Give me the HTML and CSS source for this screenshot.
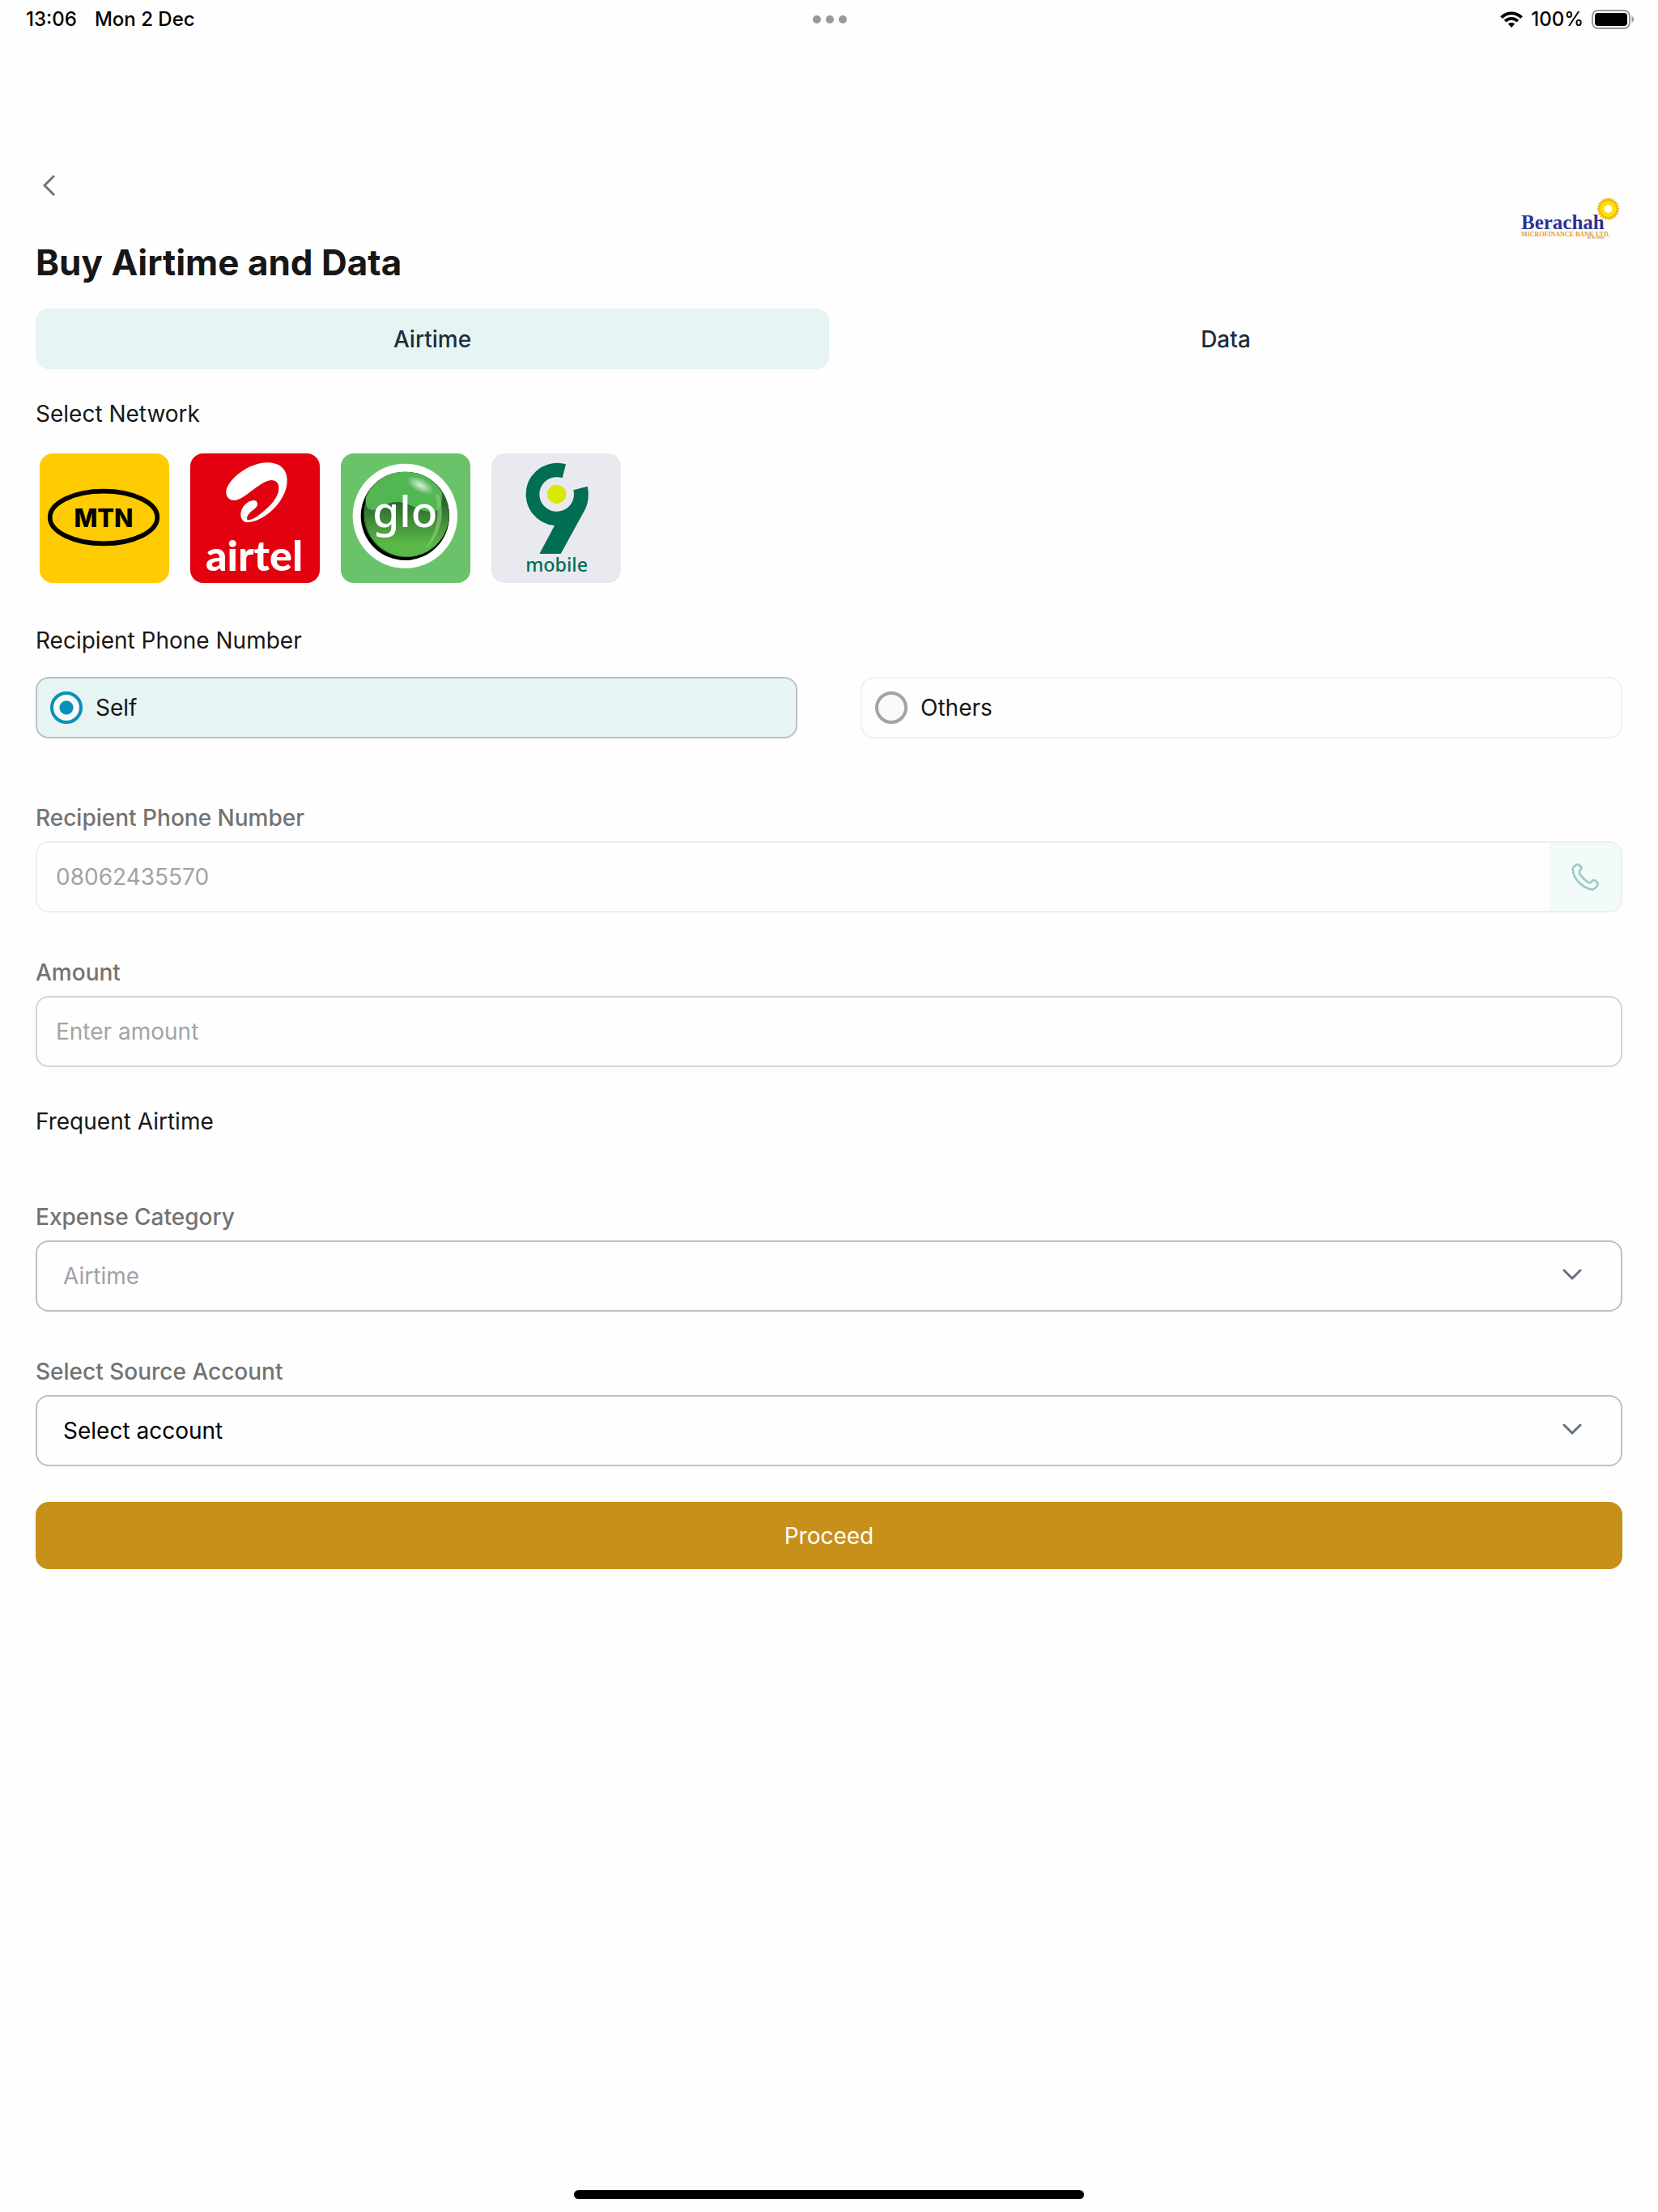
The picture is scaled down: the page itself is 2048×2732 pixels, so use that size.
FILE: index.html
```html
<!DOCTYPE html>
<html lang="en">
<head>
  <meta charset="utf-8">
  <meta name="viewport" content="width=device-width, initial-scale=1">
  <title>Buy Airtime and Data</title>
  <link rel="stylesheet" href="styles.css">
</head>

<body>
  <div class="statusBar">
    <div class="statusLeft">
      <span>13:06</span>
      <span>Mon 2 Dec</span>
    </div>
    <div class="dots"><i></i><i></i><i></i></div>
    <div class="statusRight">
      <svg class="wifi" viewBox="0 0 28 20">
        <path d="M1.500 7.600C8.500 0.500 19.500 0.500 26.500 7.600M6.200 12.200C10.600 7.800 17.400 7.800 21.800 12.200" fill="none" stroke="#000" stroke-width="3.800"/>
        <path d="M14 20L9.800 15.600C12 13.400 16 13.400 18.200 15.600Z"/>
      </svg>
      <span>100%</span>
      <svg class="battery" viewBox="0 0 52 24">
        <rect x="1" y="1" width="46" height="22" rx="7" fill="none" stroke="#999" stroke-width="2"/>
        <rect x="4" y="4" width="40" height="16" rx="4"/>
        <path d="M49.500 8C53 9.500 53 14.500 49.500 16Z" fill="#999"/>
      </svg>
    </div>
  </div>

  <main class="page">
    <header class="header">
      <div>
        <button class="backButton" type="button" aria-label="Back">
          <svg viewBox="0 0 18 28"><path d="M15 2L3 14L15 26" fill="none" stroke="#757575" stroke-width="3"/></svg>
        </button>
        <h1>Buy Airtime and Data</h1>
      </div>
      <svg class="bankLogo" viewBox="0 0 128 60" role="img" aria-label="Berachah Microfinance Bank">
        <g fill="#f3b90c">
          <path id="ray" d="M110.500 3.500L123 25.200H98Z"/>
          <use href="#ray" transform="rotate(15 110.500 18)"/>
          <use href="#ray" transform="rotate(30 110.500 18)"/>
          <use href="#ray" transform="rotate(45 110.500 18)"/>
          <use href="#ray" transform="rotate(60 110.500 18)"/>
          <use href="#ray" transform="rotate(75 110.500 18)"/>
          <use href="#ray" transform="rotate(90 110.500 18)"/>
          <use href="#ray" transform="rotate(105 110.500 18)"/>
        </g>
        <circle cx="110.500" cy="18" r="7.500" fill="#fff" stroke="#ffde00" stroke-width="5"/>
        <text class="bankName" x="3" y="43">Berachah</text>
        <text class="bankType" x="3" y="52">MICROFINANCE BANK LTD.</text>
        <text class="bankNumber" x="85" y="55">RC NO: 507628</text>
      </svg>
    </header>

    <div class="tabs" role="tablist">
      <button class="tab active" type="button" role="tab" aria-selected="true">Airtime</button>
      <button class="tab" type="button" role="tab" aria-selected="false">Data</button>
    </div>

    <h2 class="networkTitle">Select Network</h2>
    <div class="networks">
      <button class="network mtn" type="button" aria-label="MTN">
        <svg viewBox="0 0 480 480">
          <ellipse cx="237" cy="237" rx="199" ry="97" fill="none" stroke="#000" stroke-width="17"/>
          <text class="mtnText" x="237" y="272">MTN</text>
        </svg>
      </button>
      <button class="network airtel" type="button" aria-label="Airtel">
        <svg viewBox="0 0 480 480">
          <path fill="#fff" d="M163 174C145 174 133 162 133 145C133 100 215 34 285 34C335 34 359 62 359 100C359 180 270 255 213 255C197 255 187 243 187 227C187 200 212 174 235 174C245 174 250 181 249 190C247 202 232 210 224 217C214 226 207 240 211 245C216 249 234 245 255 228C300 195 328 160 328 130C328 110 320 100 300 99C255 103 200 174 163 174Z"/>
          <text class="airtelText" x="237" y="436">airtel</text>
        </svg>
      </button>
      <button class="network glo" type="button" aria-label="Glo">
        <svg viewBox="0 0 480 480">
          <defs>
            <linearGradient id="ball" x1="0" y1="0" x2="0" y2="1">
              <stop offset="0.350" stop-color="#2b642c"/>
              <stop offset="0.850" stop-color="#5ab946"/>
            </linearGradient>
            <radialGradient id="shine">
              <stop offset="0" stop-color="#fff" stop-opacity="0.800"/>
              <stop offset="1" stop-color="#fff" stop-opacity="0"/>
            </radialGradient>
          </defs>
          <circle cx="238" cy="232" r="194" fill="#fff"/>
          <circle cx="238" cy="232" r="164" fill="#000"/>
          <circle cx="243" cy="227" r="158" fill="#2f7030"/>
          <circle cx="245" cy="226" r="156" fill="url(#ball)"/>
          <path fill="#52b653" d="M238 68C172 68 114 108 92 165C90 190 98 210 118 210C150 210 165 180 207 180C255 180 280 216 345 217C372 214 376 180 375 145C348 98 296 68 238 68Z"/>
          <ellipse cx="295" cy="118" rx="56" ry="26" fill="url(#shine)" transform="rotate(28 295 118)"/>
          <path fill="#8fd07f" fill-opacity="0.600" d="M362 150C388 215 376 300 312 354C352 300 372 220 350 155Z"/>
          <text class="gloText" x="238" y="273">glo</text>
        </svg>
      </button>
      <button class="network nineMobile" type="button" aria-label="9mobile">
        <svg viewBox="0 0 480 480">
          <path fill="#006e53" d="M276 40L263 91A64 64 0 1 0 304 136L356 122C362 150 360 183 347 208L257 372H178L234 267A116 116 0 1 1 276 40Z"/>
          <circle cx="242" cy="151" r="35" fill="#d7e904"/>
          <text class="mobileText" x="242" y="439">mobile</text>
        </svg>
      </button>
    </div>

    <form>
      <h2 class="recipientTitle">Recipient Phone Number</h2>
      <div class="recipients">
        <label class="recipient selected"><input type="radio" name="recipient" checked>Self</label>
        <label class="recipient"><input type="radio" name="recipient">Others</label>
      </div>

      <div class="field phoneField">
        <label for="phone">Recipient Phone Number</label>
        <div class="inputBox disabled">
          <input id="phone" type="tel" value="08062435570" disabled>
          <button class="contacts" type="button" aria-label="Contacts" disabled>
            <svg viewBox="0 0 102 102"><path d="M5 22C5 18 16 5 22 5C28 5 38 14 37 20C37 26 28 28 29 34C30 44 58 72 68 73C74 73 76 64 82 63C88 63 98 72 98 79C98 86 84 98 78 98C44 94 7 60 5 22Z" fill="none" stroke="#9bc9c8" stroke-width="8"/></svg>
          </button>
        </div>
      </div>

      <div class="field">
        <label for="amount">Amount</label>
        <div class="inputBox">
          <input id="amount" type="text" placeholder="Enter amount">
        </div>
      </div>

      <h2 class="frequentTitle">Frequent Airtime</h2>

      <div class="field categoryField">
        <label for="category">Expense Category</label>
        <div class="selectBox">
          <select id="category" class="muted"><option>Airtime</option></select>
          <svg viewBox="0 0 24 14"><path d="M2 2L12 12L22 2" fill="none" stroke="#667085" stroke-width="3" stroke-linecap="round" stroke-linejoin="round"/></svg>
        </div>
      </div>

      <div class="field">
        <label for="account">Select Source Account</label>
        <div class="selectBox">
          <select id="account"><option>Select account</option></select>
          <svg viewBox="0 0 24 14"><path d="M2 2L12 12L22 2" fill="none" stroke="#667085" stroke-width="3" stroke-linecap="round" stroke-linejoin="round"/></svg>
        </div>
      </div>

      <button class="proceed" type="submit">Proceed</button>
    </form>
  </main>

  <div class="homeBar"></div>
</body>
</html>
```
FILE: styles.css
```css
* { box-sizing: border-box; }

body
{
    display: flex;
    flex-direction: column;
    min-height: 100vh;
    margin: 0;
    background: #fefefe;
    color: #171717;
    font: 28px/34px Inter, "Liberation Sans", sans-serif;
}

button, input, select
{
    margin: 0;
    padding: 0;
    border: 0;
    background: none;
    color: inherit;
    font: inherit;
}

h1, h2 { margin: 0; }
h2 { font-size: 28px; font-weight: 400; }
svg { display: block; }

/* status bar */
.statusBar
{
    display: grid;
    grid-template-columns: 1fr auto 1fr;
    align-items: center;
    height: 48px;
    padding: 0 30px 0 32px;
    color: #000;
    font-size: 24px;
    font-weight: 500;
}

.statusLeft { display: flex; gap: 22px; }

.statusRight
{
    display: flex;
    align-items: center;
    justify-content: flex-end;
    gap: 10px;
}

.wifi { width: 28px; height: 20px; }
.battery { width: 52px; height: 24px; }
.dots { display: flex; gap: 6px; }

.dots i
{
    width: 10px;
    height: 10px;
    border-radius: 50%;
    background: #999;
}

/* page */
.page { padding: 161px 44px 0; }

.header
{
    display: flex;
    justify-content: space-between;
    align-items: flex-start;
}

.backButton
{
    display: flex;
    align-items: center;
    height: 40px;
    padding: 0 8px;
}

.backButton svg { width: 18px; height: 28px; }

h1
{
    margin-top: 50px;
    font-size: 44px;
    font-weight: 700;
    line-height: 50px;
}

.bankLogo { width: 128px; height: 60px; margin-top: 31px; }
.bankName { fill: #2e3192; font: bold 25px "Liberation Serif", serif; }
.bankType { fill: #e0a030; font: bold 8px "Liberation Serif", serif; }
.bankNumber { fill: #b08040; font: bold 3px "Liberation Serif", serif; }

.tabs { display: flex; margin-top: 32px; }

.tab
{
    flex: 1;
    height: 75px;
    border-radius: 16px;
    color: #1c2d3a;
    font-weight: 500;
}

.tab.active { background: #e6f4f4; }

.networkTitle { margin-top: 38px; }

.networks
{
    display: flex;
    gap: 26px;
    margin-top: 32px;
    padding-left: 5px;
}

.network
{
    width: 160px;
    height: 160px;
    border-radius: 16px;
    overflow: hidden;
}

.mtn { background: #ffcb03; }
.airtel { background: #e3000f; }
.glo { background: #6ac26b; }
.nineMobile { background: #e9eaef; }

.network text { text-anchor: middle; }
.mtnText { fill: #000; font: 800 92px Inter, sans-serif; }
.airtelText { fill: #fff; font: 900 156px Lato, sans-serif; }
.gloText { fill: #fff; font: 500 160px "Noto Sans", sans-serif; }
.mobileText { fill: #006e53; font: 500 70px "Noto Sans", sans-serif; }

/* recipient */
.recipientTitle { margin-top: 54px; }
.recipients { display: flex; gap: 78px; margin-top: 28px; }

.recipient
{
    flex: 1;
    display: flex;
    align-items: center;
    gap: 16px;
    height: 76px;
    padding: 0 16px;
    border: 2px solid #e6f4f4;
    border-radius: 16px;
}

.recipient.selected { background: #e6f4f4; border-color: #bcc0cc; }

.recipient input
{
    appearance: none;
    width: 40px;
    height: 40px;
    border: 4px solid #a3a3a3;
    border-radius: 50%;
    background: #fafafa;
}

.recipient input:checked
{
    border-color: #0891b8;
    background: radial-gradient(circle, #0891b8 8px, #fafafa 9px);
}

/* fields */
.field { margin-top: 57px; }
.phoneField { margin-top: 81px; }
.categoryField { margin-top: 84px; }

.field label
{
    display: block;
    margin-bottom: 12px;
    color: #737373;
    font-weight: 500;
}

.inputBox
{
    display: flex;
    height: 88px;
    border: 2px solid #d4d4d4;
    border-radius: 16px;
    overflow: hidden;
}

.inputBox.disabled { border-color: #eee; }
.inputBox input { flex: 1; min-width: 0; padding: 0 23px; }
.inputBox input:disabled { color: #a3a3a3; }
.inputBox input::placeholder { color: #a3a3a3; }

.contacts
{
    display: flex;
    align-items: center;
    justify-content: center;
    width: 88px;
    background: #f3fafa;
}

.contacts svg { width: 34px; height: 34px; }

.frequentTitle { margin-top: 50px; }

.selectBox { display: grid; align-items: center; }
.selectBox select, .selectBox svg { grid-area: 1 / 1; }

.selectBox select
{
    appearance: none;
    width: 100%;
    height: 88px;
    padding: 0 80px 0 32px;
    border: 2px solid #bcc0cc;
    border-radius: 16px;
    color: #000;
}

.selectBox select.muted { color: #a1a1aa; }

.selectBox svg
{
    justify-self: end;
    width: 24px;
    height: 14px;
    margin: 0 50px 4px 0;
    pointer-events: none;
}

.proceed
{
    display: block;
    width: 100%;
    height: 83px;
    margin-top: 44px;
    border-radius: 16px;
    background: #c6901b;
    color: #fff;
}

.homeBar
{
    width: 630px;
    max-width: 60%;
    height: 11px;
    margin: auto auto 16px;
    border-radius: 6px;
    background: #000;
}
```
